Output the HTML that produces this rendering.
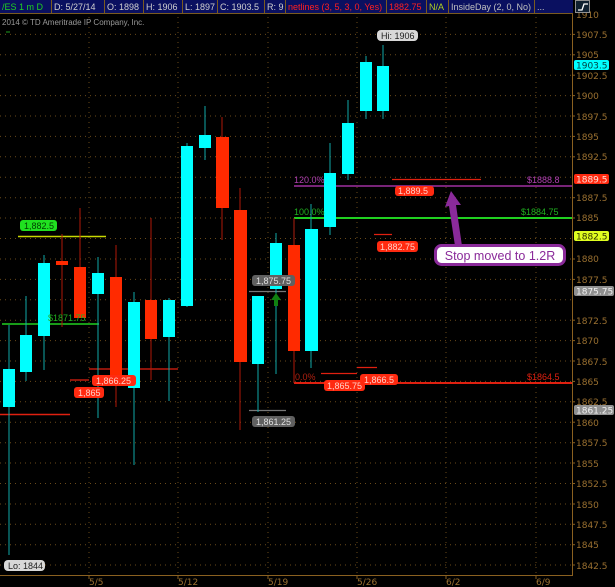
<!DOCTYPE html>
<html><head><meta charset="utf-8"><style>
html,body{margin:0;padding:0;background:#000;width:615px;height:587px;overflow:hidden}
svg{display:block;font-family:"DejaVu Sans","Liberation Sans",sans-serif}
</style></head><body>
<svg width="615" height="587" viewBox="0 0 615 587" xmlns="http://www.w3.org/2000/svg">
<rect width="615" height="587" fill="#000"/>
<g stroke="#6a4a1a" stroke-width="1" stroke-dasharray="1,4">
<line x1="0" x2="572" y1="34.4" y2="34.4"/><line x1="0" x2="572" y1="54.8" y2="54.8"/><line x1="0" x2="572" y1="75.2" y2="75.2"/><line x1="0" x2="572" y1="95.6" y2="95.6"/><line x1="0" x2="572" y1="116" y2="116"/><line x1="0" x2="572" y1="136.4" y2="136.4"/><line x1="0" x2="572" y1="156.8" y2="156.8"/><line x1="0" x2="572" y1="177.3" y2="177.3"/><line x1="0" x2="572" y1="197.7" y2="197.7"/><line x1="0" x2="572" y1="218" y2="218"/><line x1="0" x2="572" y1="238.5" y2="238.5"/><line x1="0" x2="572" y1="259" y2="259"/><line x1="0" x2="572" y1="279.4" y2="279.4"/><line x1="0" x2="572" y1="299.8" y2="299.8"/><line x1="0" x2="572" y1="320.2" y2="320.2"/><line x1="0" x2="572" y1="340.6" y2="340.6"/><line x1="0" x2="572" y1="361" y2="361"/><line x1="0" x2="572" y1="381.4" y2="381.4"/><line x1="0" x2="572" y1="401.8" y2="401.8"/><line x1="0" x2="572" y1="422.2" y2="422.2"/><line x1="0" x2="572" y1="442.7" y2="442.7"/><line x1="0" x2="572" y1="463" y2="463"/><line x1="0" x2="572" y1="483.5" y2="483.5"/><line x1="0" x2="572" y1="504" y2="504"/><line x1="0" x2="572" y1="524.3" y2="524.3"/><line x1="0" x2="572" y1="544.7" y2="544.7"/><line x1="0" x2="572" y1="565" y2="565"/>
<line x1="89" x2="89" y1="12" y2="575"/><line x1="178" x2="178" y1="12" y2="575"/><line x1="268" x2="268" y1="12" y2="575"/><line x1="357" x2="357" y1="12" y2="575"/><line x1="446" x2="446" y1="12" y2="575"/><line x1="536" x2="536" y1="12" y2="575"/>
</g>
<line x1="572.5" y1="0" x2="572.5" y2="575" stroke="#8a6020"/>
<line x1="0" y1="575.5" x2="573" y2="575.5" stroke="#8a6020"/>
<g stroke="#8a6020"><line x1="89" x2="89" y1="575" y2="579"/><line x1="178" x2="178" y1="575" y2="579"/><line x1="268" x2="268" y1="575" y2="579"/><line x1="357" x2="357" y1="575" y2="579"/><line x1="446" x2="446" y1="575" y2="579"/><line x1="536" x2="536" y1="575" y2="579"/></g>
<g fill="#9a7030" font-size="9">
<text x="89" y="585">5/5</text><text x="178" y="585">5/12</text><text x="268" y="585">5/19</text><text x="357" y="585">5/26</text><text x="446" y="585">6/2</text><text x="536" y="585">6/9</text>
</g>
<g fill="#9a7030" font-size="9">
<text x="576" y="18">1910</text><text x="576" y="38">1907.5</text><text x="576" y="58">1905</text><text x="576" y="79">1902.5</text><text x="576" y="99">1900</text><text x="576" y="120">1897.5</text><text x="576" y="140">1895</text><text x="576" y="160">1892.5</text><text x="576" y="201">1887.5</text><text x="576" y="221">1885</text><text x="576" y="262">1880</text><text x="576" y="283">1877.5</text><text x="576" y="324">1872.5</text><text x="576" y="344">1870</text><text x="576" y="365">1867.5</text><text x="576" y="385">1865</text><text x="576" y="405">1862.5</text><text x="576" y="426">1860</text><text x="576" y="446">1857.5</text><text x="576" y="467">1855</text><text x="576" y="487">1852.5</text><text x="576" y="508">1850</text><text x="576" y="528">1847.5</text><text x="576" y="548">1845</text><text x="576" y="569">1842.5</text>
</g>
<g stroke="#8a6020"><line x1="572" x2="575" y1="34.4" y2="34.4"/><line x1="572" x2="575" y1="54.8" y2="54.8"/><line x1="572" x2="575" y1="75.2" y2="75.2"/><line x1="572" x2="575" y1="95.6" y2="95.6"/><line x1="572" x2="575" y1="116" y2="116"/><line x1="572" x2="575" y1="136.4" y2="136.4"/><line x1="572" x2="575" y1="156.8" y2="156.8"/><line x1="572" x2="575" y1="197.7" y2="197.7"/><line x1="572" x2="575" y1="218" y2="218"/><line x1="572" x2="575" y1="259" y2="259"/><line x1="572" x2="575" y1="279.4" y2="279.4"/><line x1="572" x2="575" y1="320.2" y2="320.2"/><line x1="572" x2="575" y1="340.6" y2="340.6"/><line x1="572" x2="575" y1="361" y2="361"/><line x1="572" x2="575" y1="381.4" y2="381.4"/><line x1="572" x2="575" y1="401.8" y2="401.8"/><line x1="572" x2="575" y1="422.2" y2="422.2"/><line x1="572" x2="575" y1="442.7" y2="442.7"/><line x1="572" x2="575" y1="463" y2="463"/><line x1="572" x2="575" y1="483.5" y2="483.5"/><line x1="572" x2="575" y1="504" y2="504"/><line x1="572" x2="575" y1="524.3" y2="524.3"/><line x1="572" x2="575" y1="544.7" y2="544.7"/><line x1="572" x2="575" y1="565" y2="565"/></g>

<line x1="0" y1="414.5" x2="70" y2="414.5" stroke="#e02010" stroke-width="1.5"/>
<line x1="18" y1="236.5" x2="106" y2="236.5" stroke="#c8d800" stroke-width="1.5"/>
<line x1="2" y1="324" x2="99" y2="324" stroke="#20d020" stroke-width="1.5"/>
<line x1="89" y1="369" x2="178" y2="369" stroke="#e02010" stroke-width="1.2"/>
<line x1="70" y1="380" x2="89" y2="380" stroke="#e02010" stroke-width="1.2"/>
<line x1="294" y1="186" x2="572" y2="186" stroke="#a030a0" stroke-width="1.5"/>
<line x1="294" y1="218" x2="572" y2="218" stroke="#20d020" stroke-width="2"/>
<line x1="294" y1="383" x2="572" y2="383" stroke="#e02010" stroke-width="2"/>
<line x1="294" y1="218" x2="294" y2="383" stroke="#b02010" stroke-width="1"/>
<line x1="392" y1="179.5" x2="481" y2="179.5" stroke="#e02010" stroke-width="1.2"/>
<line x1="374" y1="234.5" x2="392" y2="234.5" stroke="#e02010" stroke-width="1.2"/>
<line x1="321" y1="373.5" x2="357" y2="373.5" stroke="#e02010" stroke-width="1.2"/>
<line x1="357" y1="367.5" x2="377" y2="367.5" stroke="#e02010" stroke-width="1.2"/>
<line x1="249" y1="291.5" x2="286" y2="291.5" stroke="#777" stroke-width="1.2"/>
<line x1="249" y1="410.5" x2="286" y2="410.5" stroke="#777" stroke-width="1.2"/>

<g stroke-width="1">
<line x1="9" x2="9" y1="325" y2="555" stroke="#10a8a8"/><rect x="3" y="369" width="12" height="38" fill="#00ffff"/>
<line x1="26" x2="26" y1="296" y2="381" stroke="#10a8a8"/><rect x="20" y="335" width="12" height="37" fill="#00ffff"/>
<line x1="44" x2="44" y1="255" y2="370" stroke="#10a8a8"/><rect x="38" y="263" width="12" height="73" fill="#00ffff"/>
<line x1="62" x2="62" y1="234" y2="327" stroke="#b01808"/><rect x="56" y="261" width="12" height="4" fill="#ff2a00"/>
<line x1="80" x2="80" y1="208" y2="318" stroke="#b01808"/><rect x="74" y="267" width="12" height="51" fill="#ff2a00"/>
<line x1="98" x2="98" y1="257" y2="418" stroke="#10a8a8"/><rect x="92" y="273" width="12" height="21" fill="#00ffff"/>
<line x1="116" x2="116" y1="245" y2="407" stroke="#b01808"/><rect x="110" y="277" width="12" height="98" fill="#ff2a00"/>
<line x1="134" x2="134" y1="292" y2="465" stroke="#10a8a8"/><rect x="128" y="302" width="12" height="86" fill="#00ffff"/>
<line x1="151" x2="151" y1="218" y2="380" stroke="#b01808"/><rect x="145" y="300" width="12" height="39" fill="#ff2a00"/>
<line x1="169" x2="169" y1="298" y2="401" stroke="#10a8a8"/><rect x="163" y="300" width="12" height="37" fill="#00ffff"/>
<line x1="187" x2="187" y1="143" y2="307" stroke="#10a8a8"/><rect x="181" y="146" width="12" height="160" fill="#00ffff"/>
<line x1="205" x2="205" y1="106" y2="160" stroke="#10a8a8"/><rect x="199" y="135" width="12" height="13" fill="#00ffff"/>
<line x1="222" x2="222" y1="117" y2="240" stroke="#b01808"/><rect x="216" y="137" width="13" height="71" fill="#ff2a00"/>
<line x1="240" x2="240" y1="188" y2="430" stroke="#b01808"/><rect x="234" y="210" width="13" height="152" fill="#ff2a00"/>
<line x1="258" x2="258" y1="296" y2="412" stroke="#10a8a8"/><rect x="252" y="296" width="12" height="68" fill="#00ffff"/>
<line x1="276" x2="276" y1="233" y2="374" stroke="#10a8a8"/><rect x="270" y="243" width="12" height="46" fill="#00ffff"/>
<line x1="294" x2="294" y1="240" y2="380" stroke="#b01808"/><rect x="288" y="245" width="12" height="106" fill="#ff2a00"/>
<line x1="311" x2="311" y1="204" y2="368" stroke="#10a8a8"/><rect x="305" y="229" width="13" height="122" fill="#00ffff"/>
<line x1="330" x2="330" y1="143" y2="235" stroke="#10a8a8"/><rect x="324" y="173" width="12" height="54" fill="#00ffff"/>
<line x1="348" x2="348" y1="100" y2="180" stroke="#10a8a8"/><rect x="342" y="123" width="12" height="51" fill="#00ffff"/>
<line x1="366" x2="366" y1="56" y2="119" stroke="#10a8a8"/><rect x="360" y="62" width="12" height="49" fill="#00ffff"/>
<line x1="383" x2="383" y1="45" y2="119" stroke="#10a8a8"/><rect x="377" y="66" width="12" height="45" fill="#00ffff"/>
</g>
<path d="M276 293 L271 300 L274 300 L274 306 L278 306 L278 300 L281 300 Z" fill="#108010"/>

<g font-size="9" font-family="Liberation Sans,sans-serif">
<rect x="20" y="220" width="37" height="11" rx="3" fill="#20e020"/><text x="24" y="229" fill="#004000">1,882.5</text>
<text x="48" y="321" fill="#20b020">$1871.75</text>
<rect x="92" y="375" width="44" height="11" rx="3" fill="#ff2a10"/><text x="96" y="384" fill="#ffd0c8">1,866.25</text>
<rect x="74" y="387" width="30" height="11" rx="3" fill="#ff2a10"/><text x="78" y="396" fill="#ffd0c8">1,865</text>
<rect x="252" y="275" width="43" height="11" rx="3" fill="#606060"/><text x="256" y="284" fill="#e0e0e0">1,875.75</text>
<rect x="252" y="416" width="43" height="11" rx="3" fill="#606060"/><text x="256" y="425" fill="#e0e0e0">1,861.25</text>
<rect x="324" y="380" width="41" height="11" rx="3" fill="#ff2a10"/><text x="327" y="389" fill="#ffd0c8">1,865.75</text>
<rect x="360" y="374" width="38" height="11" rx="3" fill="#ff2a10"/><text x="364" y="383" fill="#ffd0c8">1,866.5</text>
<rect x="395" y="186" width="39" height="10" rx="3" fill="#ff2a10"/><text x="398" y="194" fill="#ffd0c8">1,889.5</text>
<rect x="377" y="241" width="41" height="11" rx="3" fill="#ff2a10"/><text x="380" y="250" fill="#ffd0c8">1,882.75</text>
<rect x="377" y="30" width="41" height="11" rx="4" fill="#d8d8d8"/><text x="381" y="39" fill="#202020">Hi: 1906</text>
<rect x="4" y="560" width="41" height="11" rx="4" fill="#d8d8d8"/><text x="8" y="569" fill="#202020">Lo: 1844</text>
<text x="294" y="183" fill="#b040b0">120.0%</text>
<text x="294" y="215" fill="#20b020">100.0%</text>
<text x="295" y="380" fill="#b02010">0.0%</text>
<text x="527" y="183" fill="#b040b0">$1888.8</text>
<text x="521" y="215" fill="#20b020">$1884.75</text>
<text x="527" y="380" fill="#e02010">$1864.5</text>
</g>
<g font-size="9">
<rect x="574" y="60" width="35" height="10" rx="2" fill="#00ffff"/><text x="576" y="68.5" fill="#004040">1903.5</text>
<rect x="574" y="174" width="35" height="10" rx="2" fill="#ff2a10"/><text x="576" y="182.5" fill="#ffe0d8">1889.5</text>
<rect x="574" y="231" width="35" height="10" rx="2" fill="#e0ff20"/><text x="576" y="239.5" fill="#303000">1882.5</text>
<rect x="574" y="286" width="40" height="10" rx="2" fill="#909090"/><text x="576" y="294.5" fill="#f0f0f0">1875.75</text>
<rect x="574" y="405" width="40" height="10" rx="2" fill="#909090"/><text x="576" y="413.5" fill="#f0f0f0">1861.25</text>
</g>
<path d="M462 246 L456 205 L461 205 L451 191 L445 207 L449 206 L455 246 Z" fill="#8a2a9a"/>
<rect x="435.5" y="245.5" width="129" height="19" rx="6" fill="#fff" stroke="#8a2a9a" stroke-width="3"/>
<text x="500" y="260" text-anchor="middle" font-family="Liberation Sans,sans-serif" font-size="12.5" fill="#8a2a9a">Stop moved to 1.2R</text>

<text x="2" y="25" font-size="8" font-family="Liberation Sans,sans-serif" fill="#999">2014 © TD Ameritrade IP Company, Inc.</text>
<line x1="6" y1="32" x2="10" y2="32" stroke="#20a020"/>

<rect x="0" y="0" width="573" height="13" fill="#0a1060"/>
<g stroke="#7a5a20"><line x1="51.5" x2="51.5" y1="0" y2="13"/><line x1="104.5" x2="104.5" y1="0" y2="13"/><line x1="143.5" x2="143.5" y1="0" y2="13"/><line x1="182.5" x2="182.5" y1="0" y2="13"/><line x1="217.5" x2="217.5" y1="0" y2="13"/><line x1="264.5" x2="264.5" y1="0" y2="13"/><line x1="285.5" x2="285.5" y1="0" y2="13"/><line x1="386.5" x2="386.5" y1="0" y2="13"/><line x1="426.5" x2="426.5" y1="0" y2="13"/><line x1="448.5" x2="448.5" y1="0" y2="13"/><line x1="534.5" x2="534.5" y1="0" y2="13"/><line x1="0" x2="573" y1="13.5" y2="13.5"/></g>
<g font-size="9" font-family="Liberation Sans,sans-serif">
<text x="2" y="10" fill="#20d020">/ES 1 m D</text>
<text x="54" y="10" fill="#d0d0d0">D: 5/27/14</text>
<text x="107" y="10" fill="#d0d0d0">O: 1898</text>
<text x="146" y="10" fill="#d0d0d0">H: 1906</text>
<text x="185" y="10" fill="#d0d0d0">L: 1897</text>
<text x="220" y="10" fill="#d0d0d0">C: 1903.5</text>
<text x="267" y="10" fill="#d0d0d0">R: 9</text>
<text x="288" y="10" fill="#ff2020">netlines (3, 5, 3, 0, Yes)</text>
<text x="389" y="10" fill="#ff2020">1882.75</text>
<text x="429" y="10" fill="#b0d020">N/A</text>
<text x="451" y="10" fill="#c0c0c0">InsideDay (2, 0, No)</text>
<text x="537" y="10" fill="#c0c0c0">...</text>
</g>
<rect x="575.5" y="0.5" width="14" height="12" fill="#102030" stroke="#909090"/>
<path d="M578 10 L582 10 L584 4 L588 4" stroke="#fff" stroke-width="1.3" fill="none"/>
</svg>
</body></html>
